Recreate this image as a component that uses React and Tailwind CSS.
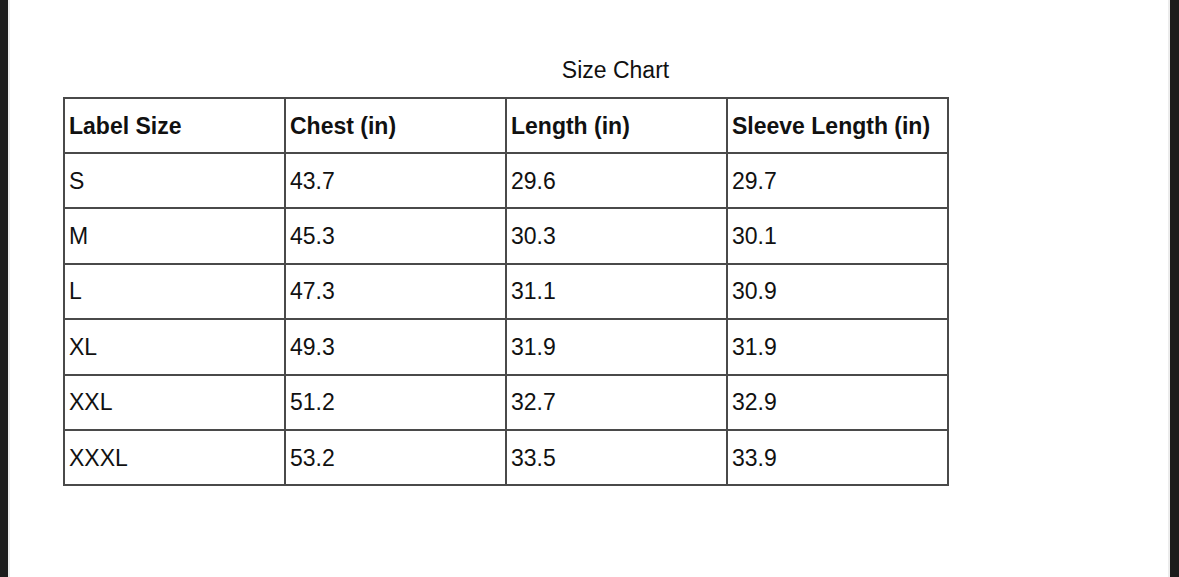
const headers = ['Label Size', 'Chest (in)', 'Length (in)', 'Sleeve Length (in)']

const rows = [
  ['S', '43.7', '29.6', '29.7'],
  ['M', '45.3', '30.3', '30.1'],
  ['L', '47.3', '31.1', '30.9'],
  ['XL', '49.3', '31.9', '31.9'],
  ['XXL', '51.2', '32.7', '32.9'],
  ['XXXL', '53.2', '33.5', '33.9'],
]

export default function App() {
  return (
    <div className="flex h-[577px] w-full overflow-hidden bg-white font-['Liberation_Sans',Arial,sans-serif] text-[#111]">
      <div className="w-[8px] bg-[#1c1c1c]" />
      <div className="w-[2px] bg-[#ececec]" />

      <main className="flex-1 pl-[53px] pt-[57px]">
        <h1 className="text-center text-[23px] leading-[26px]">Size Chart</h1>

        <table className="mt-[14px] w-[886px] table-fixed border-collapse border-2 border-[#4a4a4a] text-[23px] leading-[26px]">
          <thead>
            <tr className="h-[55px]">
              {headers.map((h) => (
                <th
                  key={h}
                  className="border-2 border-[#4a4a4a] pl-[4px] text-left align-middle font-bold"
                >
                  {h}
                </th>
              ))}
            </tr>
          </thead>
          <tbody>
            {rows.map((row) => (
              <tr key={row[0]} className="h-[55.4px]">
                {row.map((cell, i) => (
                  <td key={i} className="border-2 border-[#4a4a4a] pl-[4px] align-middle">
                    {cell}
                  </td>
                ))}
              </tr>
            ))}
          </tbody>
        </table>
      </main>

      <div className="w-[2px] bg-[#ececec]" />
      <div className="w-[9px] bg-[#1c1c1c]" />
    </div>
  )
}
